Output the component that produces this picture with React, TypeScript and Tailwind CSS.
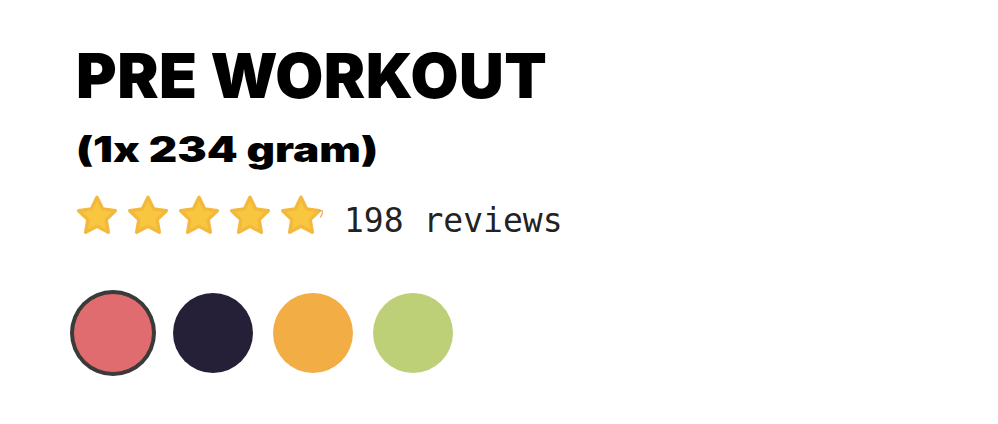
import React from "react";

function Star({ partial = false }: { partial?: boolean }) {
  return (
    <svg width="44" height="42" viewBox="0 0 100 100" className="shrink-0">
      <polygon
        points="50,8 63.5,35.4 93.7,39.8 71.9,61.1 77,91.2 50,77 23,91.2 28.1,61.1 6.3,39.8 36.5,35.4"
        fill="#F8C63F"
        stroke="#F3B93C"
        strokeWidth="8"
        strokeLinejoin="round"
      />
      {partial && (
        <path d="M92 40 L104 40 L96 56" fill="none" stroke="#F0A64A" strokeWidth="3" strokeLinejoin="round" />
      )}
    </svg>
  );
}

const swatches = [
  "w-[80px] h-[80px] rounded-full bg-[#E06C70] ring-[3px] ring-[#3a3a3a] border border-[#3a3a3a]",
  "w-[80px] h-[80px] rounded-full bg-[#252038]",
  "w-[80px] h-[80px] rounded-full bg-[#F2AD45]",
  "w-[80px] h-[80px] rounded-full bg-[#BDD077]",
];

export default function App() {
  return (
    <div className="w-[998px] h-[424px] overflow-hidden bg-white pl-[76px] pt-[45px] font-['Inter',sans-serif]">
      <h1 className="text-[62px] leading-none font-black tracking-[0.5px] text-black">
        PRE WORKOUT
      </h1>
      <h2 className="w-fit mt-[25px] text-[35px] leading-none font-black text-black origin-left scale-x-[1.26] [font-variant-ligatures:no-contextual] [font-feature-settings:'calt'_0]">
        (1x 234 gram)
      </h2>
      <div className="mt-[27px] flex items-start">
        <div className="flex gap-[7px] -ml-[1px]">
          <Star />
          <Star />
          <Star />
          <Star />
          <Star partial />
        </div>
        <span className="ml-[21px] mt-[10px] text-[33px] leading-none text-[#222222] font-['DejaVu_Sans_Mono',monospace]">
          198 reviews
        </span>
      </div>
      <div className="mt-[56px] flex gap-[20px] -ml-[3px]">
        {swatches.map((cls) => (
          <div key={cls} className={cls} />
        ))}
      </div>
    </div>
  );
}
